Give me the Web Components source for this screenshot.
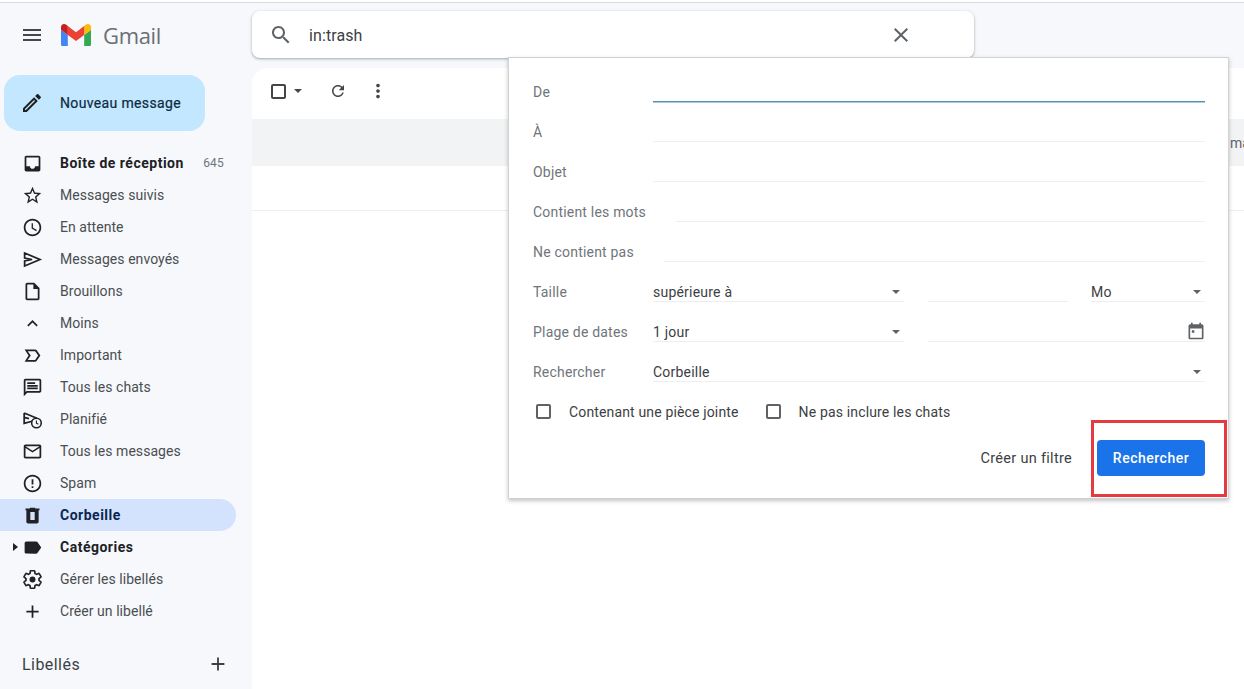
<!DOCTYPE html>
<html lang="fr">
<head>
<meta charset="utf-8">
<title>Gmail</title>
<style>
  html, body { margin: 0; height: 100%; overflow: hidden; background: #f6f8fc; font-family: Roboto, "Liberation Sans", sans-serif; }
</style>
</head>
<body>
<gm-app></gm-app>
<script>
// Material icon paths, 24x24
const ICONS = {
  menu: 'M3 18h18v-2H3v2zm0-5h18v-2H3v2zm0-7v2h18V6H3z',
  edit: 'M3 17.25V21h3.75L17.81 9.94l-3.75-3.75L3 17.25zM5.92 19H5v-.92l9.06-9.06.92.92L5.92 19zM20.71 5.63l-2.34-2.34c-.2-.2-.45-.29-.71-.29s-.51.1-.7.29l-1.83 1.83 3.75 3.75 1.83-1.83c.39-.39.39-1.02 0-1.41z',
  inbox: 'M19 3H4.99c-1.11 0-1.98.89-1.98 2L3 19c0 1.1.88 2 1.99 2H19c1.1 0 2-.9 2-2V5c0-1.11-.9-2-2-2zm0 12h-4c0 1.66-1.35 3-3 3s-3-1.34-3-3H4.99V5H19v10z',
  star: 'M22 9.24l-7.19-.62L12 2 9.19 8.63 2 9.24l5.46 4.73L5.82 21 12 17.27 18.18 21l-1.63-7.03L22 9.24zM12 15.4l-3.76 2.27 1-4.28-3.32-2.88 4.38-.38L12 6.1l1.71 4.04 4.38.38-3.32 2.88 1 4.28L12 15.4z',
  clock: 'M11.99 2C6.47 2 2 6.48 2 12s4.47 10 9.99 10C17.52 22 22 17.52 22 12S17.52 2 11.99 2zM12 20c-4.42 0-8-3.58-8-8s3.58-8 8-8 8 3.58 8 8-3.58 8-8 8zm.5-13H11v6l5.25 3.15.75-1.23-4.5-2.67z',
  draft: 'M14 2H6c-1.1 0-2 .9-2 2v16c0 1.1.9 2 2 2h12c1.1 0 2-.9 2-2V8l-6-6zm4 18H6V4h7v5h5v11z',
  less: 'M12 8l-6 6 1.41 1.41L12 10.83l4.59 4.58L18 14z',
  important: 'M15 19H3l4.5-7L3 5h12c.65 0 1.26.31 1.63.84L21 12l-4.37 6.16c-.37.52-.98.84-1.63.84zm-8.5-2H15l3.5-5-3.5-5H6.5L10 12l-3.5 5z',
  chat: 'M20 2H4c-1.1 0-1.99.9-1.99 2L2 22l4-4h14c1.1 0 2-.9 2-2V4c0-1.1-.9-2-2-2zM20 16H5.17L4 17.17V4h16v12zM6 12h12v2H6zM6 9h12v2H6zM6 6h9v2H6z',
  mail: 'M22 6c0-1.1-.9-2-2-2H4c-1.1 0-2 .9-2 2v12c0 1.1.9 2 2 2h16c1.1 0 2-.9 2-2V6zm-2 0l-8 5-8-5h16zm0 12H4V8l8 5 8-5v10z',
  spam: 'M11 15h2v2h-2zm0-8h2v6h-2zm.99-5C6.47 2 2 6.48 2 12s4.47 10 9.99 10C17.52 22 22 17.52 22 12S17.52 2 11.99 2zM12 20c-4.42 0-8-3.58-8-8s3.58-8 8-8 8 3.58 8 8-3.58 8-8 8z',
  trash: 'M15 3v1h5v2h-1v13c0 1.1-.9 2-2 2H7c-1.1 0-2-.9-2-2V6H4V4h5V3h6zM9.5 8v9h5V8h-5z',
  label: 'M17.63 5.84C17.27 5.33 16.67 5 16 5L5 5.01C3.9 5.01 3 5.9 3 7v10c0 1.1.9 1.99 2 1.99L16 19c.67 0 1.27-.33 1.63-.84L22 12l-4.37-6.16z',
  add: 'M19 13h-6v6h-2v-6H5v-2h6V5h2v6h6v2z',
  search: 'M15.5 14h-.79l-.28-.27C15.41 12.59 16 11.11 16 9.5 16 5.91 13.09 3 9.5 3S3 5.91 3 9.5 5.91 16 9.5 16c1.61 0 3.09-.59 4.23-1.57l.27.28v.79l5 4.99L20.49 19l-4.99-5zm-6 0C7.01 14 5 11.99 5 9.5S7.01 5 9.5 5 14 7.01 14 9.5 11.99 14 9.5 14z',
  close: 'M19 6.41L17.59 5 12 10.59 6.41 5 5 6.41 10.59 12 5 17.59 6.41 19 12 13.41 17.59 19 19 17.59 13.41 12z',
  refresh: 'M17.65 6.35C16.2 4.9 14.21 4 12 4c-4.42 0-7.99 3.58-7.99 8s3.57 8 7.99 8c3.73 0 6.84-2.55 7.73-6h-2.08c-.82 2.33-3.04 4-5.65 4-3.31 0-6-2.69-6-6s2.69-6 6-6c1.66 0 3.14.69 4.22 1.78L13 11h7V4l-2.35 2.35z',
  more: 'M12 8c1.1 0 2-.9 2-2s-.9-2-2-2-2 .9-2 2 .9 2 2 2zm0 2c-1.1 0-2 .9-2 2s.9 2 2 2 2-.9 2-2-.9-2-2-2zm0 6c-1.1 0-2 .9-2 2s.9 2 2 2 2-.9 2-2-.9-2-2-2z',
  calendar: 'M19 4h-1V2h-2v2H8V2H6v2H5c-1.11 0-1.99.9-1.99 2L3 20c0 1.1.89 2 2 2h14c1.1 0 2-.9 2-2V6c0-1.1-.9-2-2-2zm0 16H5V9h14v11zM7 11h3v3H7z'
};

// The icons that are not a single filled Material path
const CUSTOM = {
  send: '<path fill="none" stroke="currentColor" stroke-width="2" stroke-linejoin="miter" d="M3 4.6L20.5 12 3 19.4V13.6L11.5 12 3 10.4z"/>',
  scheduled: '<path fill="none" stroke="currentColor" stroke-width="2" d="M2.5 4.5v12l9-2.5M2.5 4.5L17 10.5M2.5 9.5L8 11"/><circle cx="16.5" cy="16" r="5.5" fill="none" stroke="currentColor" stroke-width="1.8"/><path fill="none" stroke="currentColor" stroke-width="1.3" d="M16.5 13v3.2l2.2 1.3"/>',
  gear: '<path fill="none" stroke="currentColor" stroke-width="1.9" d="M19.43 12.98c.04-.32.07-.64.07-.98s-.03-.66-.07-.98l2.11-1.65c.19-.15.24-.42.12-.64l-2-3.46c-.12-.22-.39-.3-.61-.22l-2.49 1c-.52-.4-1.08-.73-1.69-.98l-.38-2.65C14.46 2.18 14.25 2 14 2h-4c-.25 0-.46.18-.49.42l-.38 2.65c-.61.25-1.17.59-1.69.98l-2.49-1c-.23-.09-.49 0-.61.22l-2 3.46c-.13.22-.07.49.12.64l2.11 1.65c-.04.32-.07.65-.07.98s.03.66.07.98l-2.11 1.65c-.19.15-.24.42-.12.64l2 3.46c.12.22.39.3.61.22l2.49-1c.52.4 1.08.73 1.69.98l.38 2.65c.03.24.24.42.49.42h4c.25 0 .46-.18.49-.42l.38-2.65c.61-.25 1.17-.59 1.69-.98l2.49 1c.23.09.49 0 .61-.22l2-3.46c.12-.22.07-.49-.12-.64l-2.11-1.65z"/><circle cx="12" cy="12" r="3.4" fill="currentColor"/>'
};

class GmIcon extends HTMLElement {
  connectedCallback() {
    const name = this.getAttribute('name');
    const size = this.getAttribute('size') || 24;
    const body = CUSTOM[name] || `<path fill="currentColor" d="${ICONS[name]}"/>`;
    this.attachShadow({ mode: 'open' }).innerHTML = `
      <style>
        :host { display: inline-flex; flex: none; width: ${size}px; height: ${size}px; }
        svg { display: block; width: 100%; height: 100%; }
      </style>
      <svg viewBox="0 0 24 24">${body}</svg>`;
  }
}

class GmCaret extends HTMLElement {
  constructor() {
    super();
    this.attachShadow({ mode: 'open' }).innerHTML = `
      <style>
        :host { display: block; flex: none; width: 0; height: 0;
          border-left: 4.5px solid transparent; border-right: 4.5px solid transparent;
          border-top: 4.5px solid var(--caret, #5f6368); }
      </style>`;
  }
}

class GmLogo extends HTMLElement {
  constructor() {
    super();
    this.attachShadow({ mode: 'open' }).innerHTML = `
      <style>
        :host { display: flex; align-items: center; height: 64px; padding-left: 20px; color: #444746; }
        svg { width: 30px; height: 22.5px; margin: 0 12px 0 17px; }
        span { font: 400 22px/1 "Open Sans", Roboto, sans-serif; color: #6b6f73; letter-spacing: -.35px; }
      </style>
      <gm-icon name="menu"></gm-icon>
      <svg viewBox="52 42 88 66">
        <path fill="#4285f4" d="M58 108h14V74L52 59v43c0 3.32 2.69 6 6 6"/>
        <path fill="#34a853" d="M120 108h14c3.32 0 6-2.69 6-6V59l-20 15"/>
        <path fill="#fbbc04" d="M120 48v26l20-15v-8c0-7.42-8.47-11.65-14.4-7.2"/>
        <path fill="#ea4335" d="M72 74V48l24 18 24-18v26L96 92"/>
        <path fill="#c5221f" d="M52 51v8l20 15V48l-5.6-4.2c-5.94-4.45-14.4-.22-14.4 7.2"/>
      </svg>
      <span>Gmail</span>`;
  }
}

class GmCompose extends HTMLElement {
  constructor() {
    super();
    this.attachShadow({ mode: 'open' }).innerHTML = `
      <style>
        :host { display: flex; align-items: center; gap: 16px; box-sizing: border-box; width: 201px; height: 56px;
          margin: 8px 0 16px 4px; padding-left: 16px; border-radius: 16px; background: #c2e7ff; color: #1f1f1f;
          font: 400 14px Roboto, sans-serif; letter-spacing: .35px; }
        span { color: #0e2a3f; -webkit-text-stroke: .2px #0e2a3f; }
      </style>
      <gm-icon name="edit"></gm-icon><span><slot></slot></span>`;
  }
}

class GmNavItem extends HTMLElement {
  connectedCallback() {
    const caret = this.hasAttribute('caret') ? '<b></b>' : '';
    const count = this.getAttribute('count');
    this.attachShadow({ mode: 'open' }).innerHTML = `
      <style>
        :host { display: flex; align-items: center; box-sizing: border-box; width: 236px; height: 32px; padding: 0 12px 0 13px;
          border-radius: 0 16px 16px 0; color: #4b4e50; font: 400 14px Roboto, sans-serif; letter-spacing: .05px; }
        :host([bold]) { color: #202124; font-weight: 700; letter-spacing: .5px; }
        :host([active]) { background: #d3e3fd; color: #0b2550; font-weight: 700; letter-spacing: .5px; }
        .slot { flex: none; width: 9px; }
        b { display: block; width: 0; height: 0; border-left: 5px solid #202124;
          border-top: 4px solid transparent; border-bottom: 4px solid transparent; }
        gm-icon { color: #202124; margin-right: 17px; }
        .name { flex: 1; }
        .count { font-size: 12px; font-weight: 400; color: #70757a; letter-spacing: .2px; }
      </style>
      <div class="slot">${caret}</div>
      <gm-icon name="${this.getAttribute('icon')}" size="21"></gm-icon>
      <span class="name"><slot></slot></span>
      ${count ? `<span class="count">${count}</span>` : ''}`;
  }
}

class GmSidebar extends HTMLElement {
  constructor() {
    super();
    this.attachShadow({ mode: 'open' }).innerHTML = `
      <style>
        :host { display: block; flex: none; width: 252px; }
        .labels { display: flex; align-items: center; justify-content: space-between; height: 32px;
          margin-top: 21px; padding: 0 22px; width: 207px; color: #3c4043; font: 400 16px Roboto, sans-serif; letter-spacing: .45px; }
      </style>
      <gm-logo></gm-logo>
      <gm-compose>Nouveau message</gm-compose>
      <gm-nav-item icon="inbox" bold count="645">Boîte de réception</gm-nav-item>
      <gm-nav-item icon="star">Messages suivis</gm-nav-item>
      <gm-nav-item icon="clock">En attente</gm-nav-item>
      <gm-nav-item icon="send">Messages envoyés</gm-nav-item>
      <gm-nav-item icon="draft">Brouillons</gm-nav-item>
      <gm-nav-item icon="less">Moins</gm-nav-item>
      <gm-nav-item icon="important">Important</gm-nav-item>
      <gm-nav-item icon="chat">Tous les chats</gm-nav-item>
      <gm-nav-item icon="scheduled">Planifié</gm-nav-item>
      <gm-nav-item icon="mail">Tous les messages</gm-nav-item>
      <gm-nav-item icon="spam">Spam</gm-nav-item>
      <gm-nav-item icon="trash" active>Corbeille</gm-nav-item>
      <gm-nav-item icon="label" bold caret>Catégories</gm-nav-item>
      <gm-nav-item icon="gear">Gérer les libellés</gm-nav-item>
      <gm-nav-item icon="add">Créer un libellé</gm-nav-item>
      <div class="labels"><span>Libellés</span><gm-icon name="add" size="22"></gm-icon></div>`;
  }
}

class GmSearch extends HTMLElement {
  constructor() {
    super();
    this.attachShadow({ mode: 'open' }).innerHTML = `
      <style>
        :host { display: flex; align-items: center; box-sizing: border-box; width: 722px; height: 47px; margin: 8px 0 10px;
          padding: 0 61px 0 17px; border-radius: 8px; background: #fff; color: #5f6368;
          box-shadow: 0 1px 2px rgba(60,64,67,.3), 0 1px 3px 1px rgba(60,64,67,.12); }
        span { flex: 1; margin-left: 16px; padding-top: 1px; font: 400 16px Roboto, sans-serif; color: #3c4043; letter-spacing: .1px; }
      </style>
      <gm-icon name="search"></gm-icon>
      <span><slot></slot></span>
      <gm-icon name="close"></gm-icon>`;
  }
}

class GmMailPanel extends HTMLElement {
  constructor() {
    super();
    this.attachShadow({ mode: 'open' }).innerHTML = `
      <style>
        :host { display: block; height: 621px; background: #fff; border-radius: 16px 0 0 0; overflow: hidden; color: #444746; }
        .tools { display: flex; align-items: center; height: 51px; padding: 0 0 5px 19px; box-sizing: border-box; }
        .check { box-sizing: border-box; width: 15px; height: 15px; border: 2px solid #444746; border-radius: 2px; }
        gm-caret { margin-left: 8px; --caret: #444746; }
        .refresh { margin-left: 27px; }
        .more { margin-left: 20px; }
        .band { display: flex; align-items: center; justify-content: flex-end; height: 47px; background: #f2f3f4;
          overflow: hidden; font: 400 14px Roboto, sans-serif; color: #5f6368; }
        .band span { margin-right: -8px; width: 22px; }
        .row { height: 44px; border-bottom: 1px solid #eceff1; }
      </style>
      <div class="tools">
        <div class="check"></div>
        <gm-caret></gm-caret>
        <gm-icon class="refresh" name="refresh" size="18"></gm-icon>
        <gm-icon class="more" name="more" size="22"></gm-icon>
      </div>
      <div class="band"><span>ma</span></div>
      <div class="row"></div>`;
  }
}

class GmField extends HTMLElement {
  constructor() {
    super();
    this.attachShadow({ mode: 'open' }).innerHTML = `
      <style>
        :host { display: flex; align-items: center; gap: 8px; flex: 1; min-width: 0; box-sizing: border-box; height: 20px;
          border-bottom: 1px solid #eceef0; color: #3c4043; font: 400 14px Roboto, sans-serif; letter-spacing: .22px; }
        :host([focused]) { border-bottom-color: #4f8fb0; box-shadow: 0 1px 0 rgba(79,143,176,.45); }
        .v { flex: 1; }
        gm-caret { margin-right: 4px; }
        ::slotted(gm-icon) { color: #5f6368; margin: 0 -1px 2px 0; }
      </style>
      <span class="v"><slot></slot></span>
      <slot name="end"></slot>`;
    this._ready = false;
  }
  connectedCallback() {
    if (this._ready || !this.hasAttribute('select')) return;
    this._ready = true;
    this.shadowRoot.appendChild(document.createElement('gm-caret'));
  }
}

class GmRow extends HTMLElement {
  connectedCallback() {
    const wide = this.hasAttribute('wide');
    this.attachShadow({ mode: 'open' }).innerHTML = `
      <style>
        :host { display: flex; align-items: center; height: 20px; font: 400 14px Roboto, sans-serif; color: #70757a; letter-spacing: .2px; }
        .l { flex: none; ${wide ? 'padding-right: 30px;' : 'width: 120px;'} }
        .f { display: flex; flex: 1; gap: 24px; min-width: 0; }
      </style>
      <span class="l">${this.getAttribute('label')}</span>
      <div class="f"><slot></slot></div>`;
  }
}

class GmCheck extends HTMLElement {
  constructor() {
    super();
    this.attachShadow({ mode: 'open' }).innerHTML = `
      <style>
        :host { display: flex; align-items: center; font: 400 14px Roboto, sans-serif; color: #3c4043; letter-spacing: .15px; }
        i { box-sizing: border-box; width: 15px; height: 15px; margin-right: 18px; border: 2px solid #5f6368; border-radius: 2px; }
      </style>
      <i></i><slot></slot>`;
  }
}

class GmSearchPopup extends HTMLElement {
  constructor() {
    super();
    this.attachShadow({ mode: 'open' }).innerHTML = `
      <style>
        :host { position: absolute; left: 508px; top: 57px; box-sizing: border-box; width: 721px; height: 442px;
          display: flex; flex-direction: column; gap: 20px; padding: 24px 23px 22px 24px; background: #fff;
          border: 1px solid #d0d2d4; box-shadow: 0 2px 4px rgba(60,64,67,.3); }
        .checks { display: flex; height: 20px; padding-left: 3px; gap: 27px; }
        .actions { display: flex; align-items: center; justify-content: flex-end; gap: 25px; margin-top: -1px;
          font: 400 14.5px Roboto, sans-serif; color: #3c4043; letter-spacing: .3px; }
        button { box-sizing: border-box; width: 108px; height: 36px; border: 0; border-radius: 4px; background: #1a73e8;
          color: #fff; font: 500 14px Roboto, sans-serif; letter-spacing: .5px; }
        .w251 { flex: none; width: 251px; }
        .w140 { flex: none; width: 140px; }
        .w114 { flex: none; width: 114px; margin-left: -1px; }
      </style>
      <gm-row label="De"><gm-field focused></gm-field></gm-row>
      <gm-row label="À"><gm-field></gm-field></gm-row>
      <gm-row label="Objet"><gm-field></gm-field></gm-row>
      <gm-row label="Contient les mots" wide><gm-field></gm-field></gm-row>
      <gm-row label="Ne contient pas" wide><gm-field></gm-field></gm-row>
      <gm-row label="Taille">
        <gm-field class="w251" select>supérieure à</gm-field>
        <gm-field class="w140"></gm-field>
        <gm-field class="w114" select>Mo</gm-field>
      </gm-row>
      <gm-row label="Plage de dates">
        <gm-field class="w251" select>1 jour</gm-field>
        <gm-field><gm-icon slot="end" name="calendar" size="20"></gm-icon></gm-field>
      </gm-row>
      <gm-row label="Rechercher"><gm-field select>Corbeille</gm-field></gm-row>
      <div class="checks">
        <gm-check>Contenant une pièce jointe</gm-check>
        <gm-check>Ne pas inclure les chats</gm-check>
      </div>
      <div class="actions"><span>Créer un filtre</span><button>Rechercher</button></div>`;
  }
}

class GmApp extends HTMLElement {
  constructor() {
    super();
    this.attachShadow({ mode: 'open' }).innerHTML = `
      <style>
        :host { display: block; position: relative; width: 1244px; height: 689px; overflow: hidden; }
        .top { height: 2px; background: #fff; border-bottom: 1px solid #d9dce0; }
        .shell { display: flex; }
        main { flex: 1; min-width: 0; }
        .mark { position: absolute; left: 1091px; top: 420px; box-sizing: border-box; width: 136px; height: 77px; border: 3px solid #e53a40; }
      </style>
      <div class="top"></div>
      <div class="shell">
        <gm-sidebar></gm-sidebar>
        <main>
          <gm-search>in:trash</gm-search>
          <gm-mail-panel></gm-mail-panel>
        </main>
      </div>
      <gm-search-popup></gm-search-popup>
      <div class="mark"></div>`;
  }
}

customElements.define('gm-icon', GmIcon);
customElements.define('gm-caret', GmCaret);
customElements.define('gm-logo', GmLogo);
customElements.define('gm-compose', GmCompose);
customElements.define('gm-nav-item', GmNavItem);
customElements.define('gm-sidebar', GmSidebar);
customElements.define('gm-search', GmSearch);
customElements.define('gm-mail-panel', GmMailPanel);
customElements.define('gm-field', GmField);
customElements.define('gm-row', GmRow);
customElements.define('gm-check', GmCheck);
customElements.define('gm-search-popup', GmSearchPopup);
customElements.define('gm-app', GmApp);
</script>
</body>
</html>
